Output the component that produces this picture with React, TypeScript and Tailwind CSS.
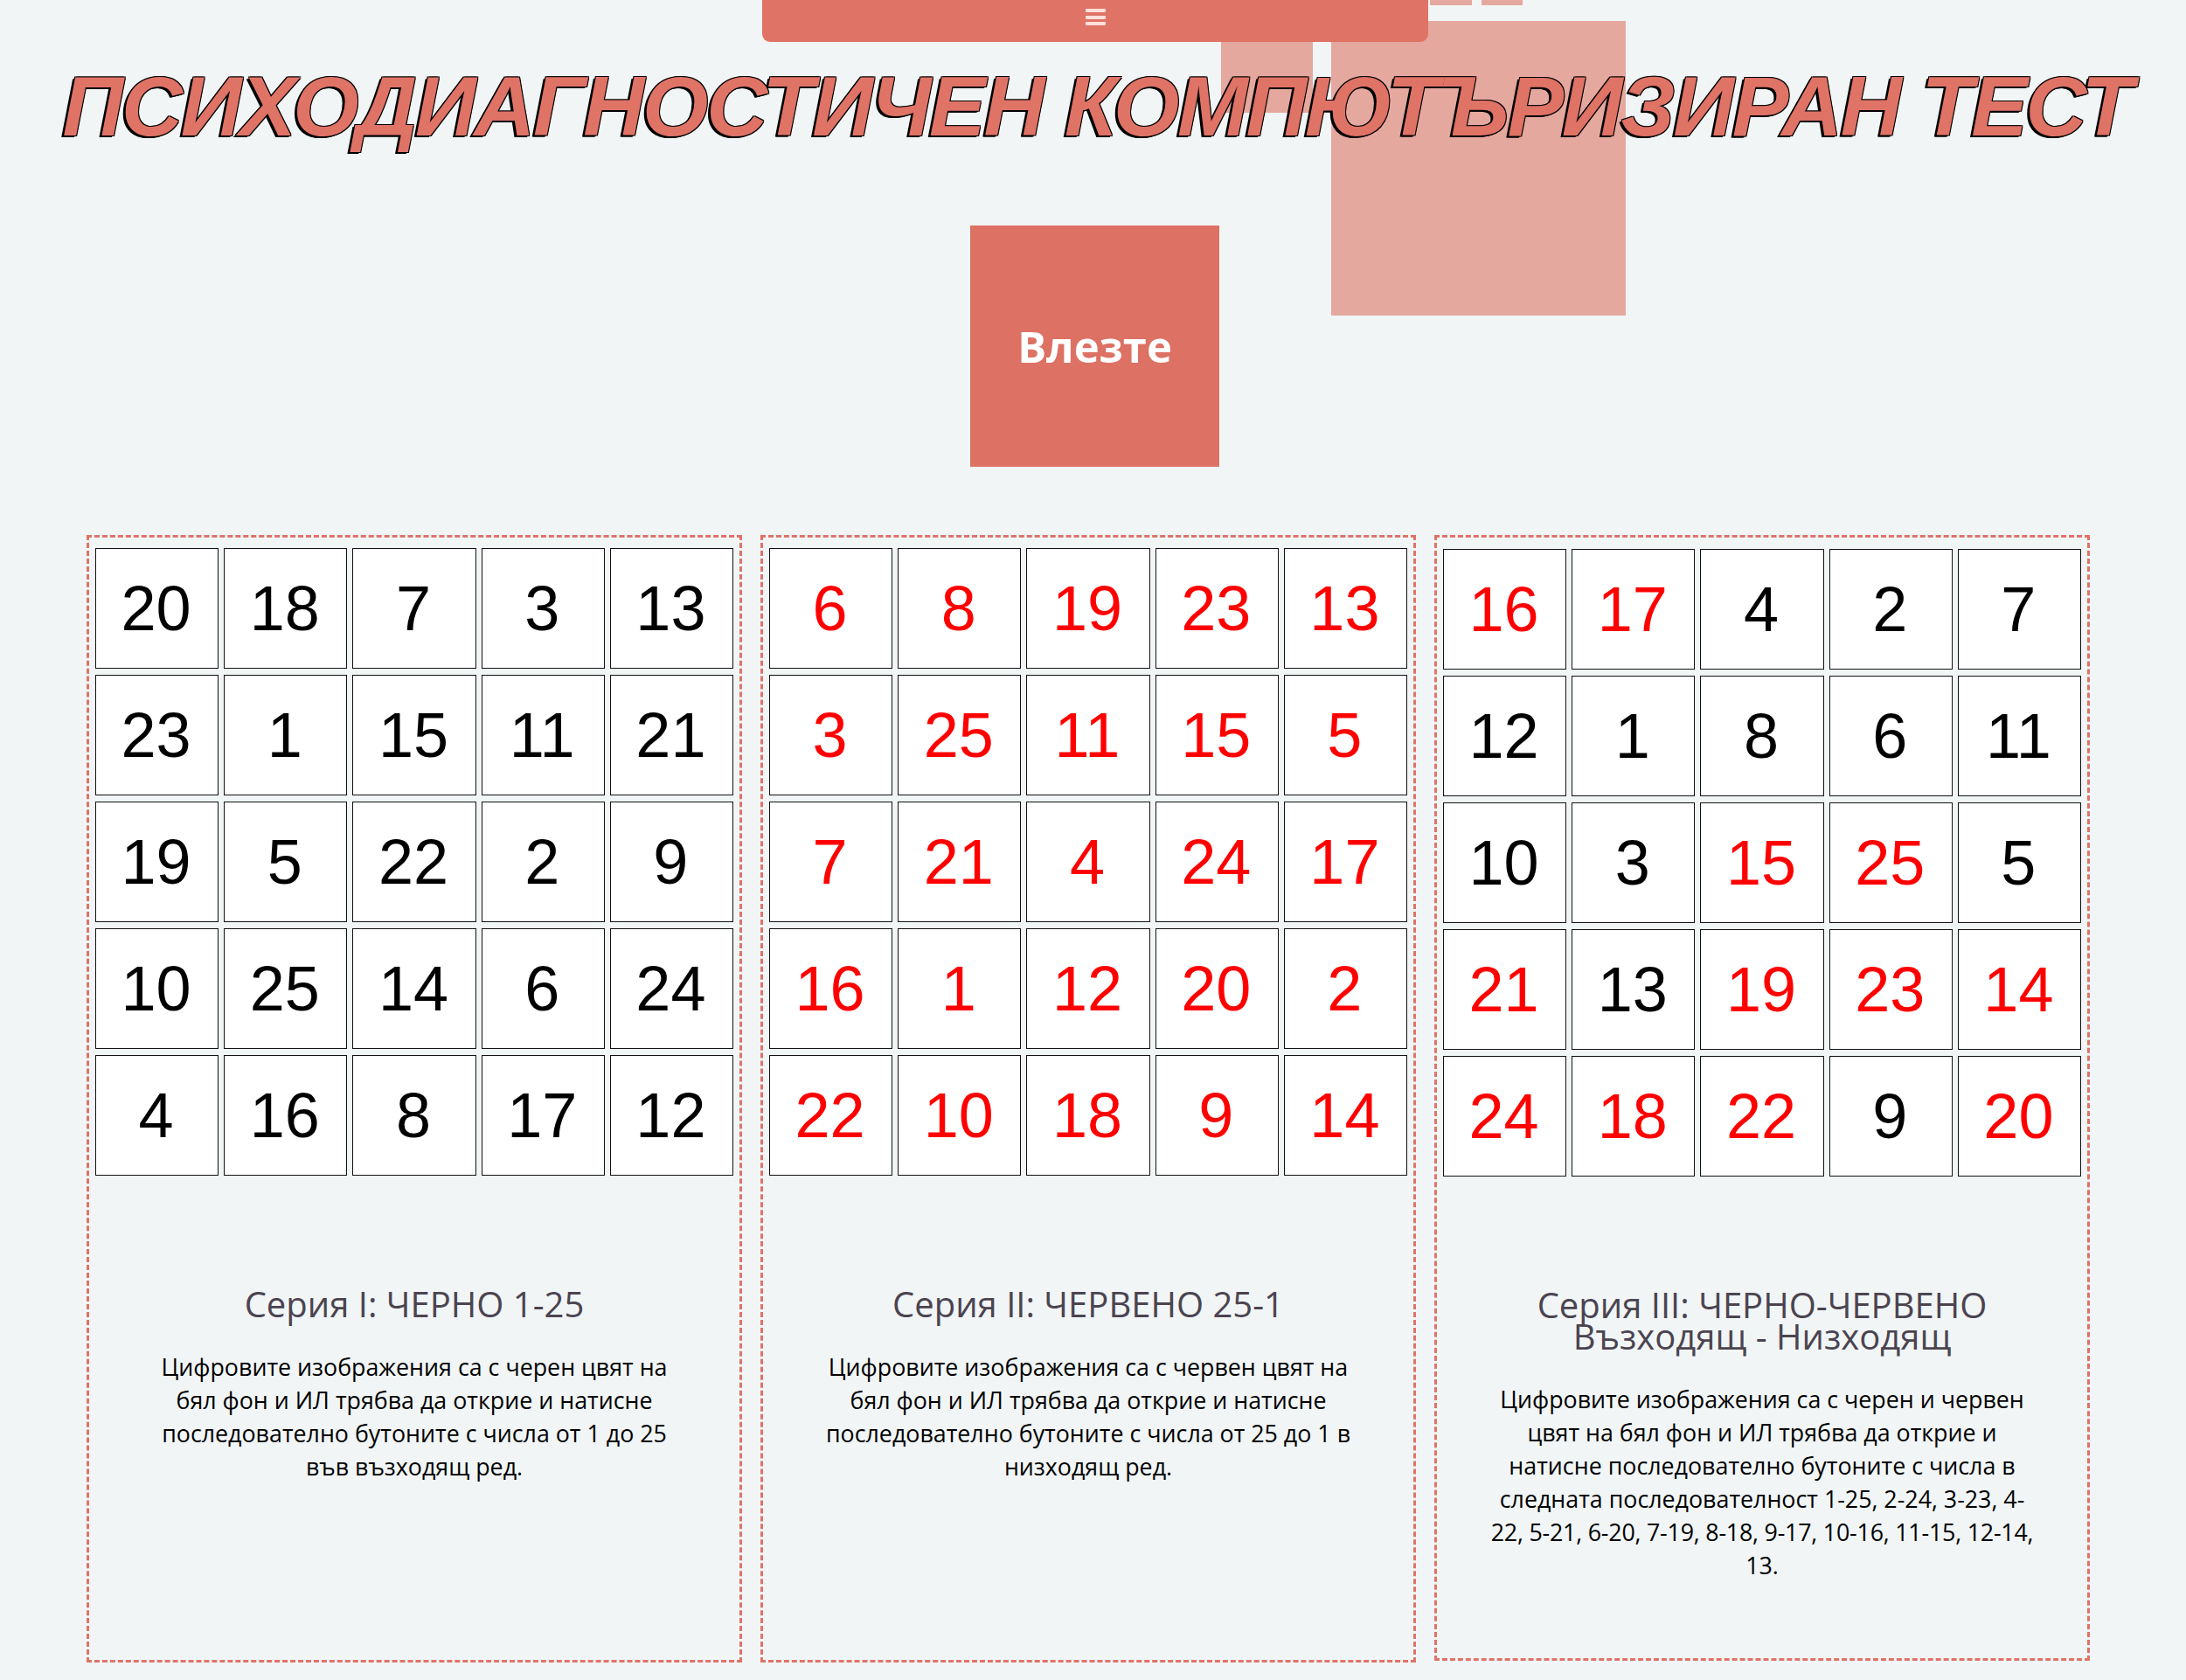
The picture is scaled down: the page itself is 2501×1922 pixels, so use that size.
import React from "react";

type Cell = { n: number; red: boolean };

const black = (nums: number[]): Cell[] => nums.map((n) => ({ n, red: false }));
const red = (nums: number[]): Cell[] => nums.map((n) => ({ n, red: true }));

const series = [
  {
    box: "h-[1290px] pt-[12px]",
    cells: black([20, 18, 7, 3, 13, 23, 1, 15, 11, 21, 19, 5, 22, 2, 9, 10, 25, 14, 6, 24, 4, 16, 8, 17, 12]),
    title: ["Серия I: ЧЕРНО 1-25"],
    text: [
      "Цифровите изображения са с черен цвят на",
      "бял фон и ИЛ трябва да открие и натисне",
      "последователно бутоните с числа от 1 до 25",
      "във възходящ ред.",
    ],
  },
  {
    box: "h-[1290px] pt-[12px]",
    cells: red([6, 8, 19, 23, 13, 3, 25, 11, 15, 5, 7, 21, 4, 24, 17, 16, 1, 12, 20, 2, 22, 10, 18, 9, 14]),
    title: ["Серия II: ЧЕРВЕНО 25-1"],
    text: [
      "Цифровите изображения са с червен цвят на",
      "бял фон и ИЛ трябва да открие и натисне",
      "последователно бутоните с числа от 25 до 1 в",
      "низходящ ред.",
    ],
  },
  {
    box: "h-[1288px] pt-[13px]",
    cells: [
      ...red([16, 17]), ...black([4, 2, 7, 12, 1, 8, 6, 11, 10, 3]), ...red([15, 25]), ...black([5]),
      ...red([21]), ...black([13]), ...red([19, 23, 14, 24, 18, 22]), ...black([9]), ...red([20]),
    ],
    title: ["Серия III: ЧЕРНО-ЧЕРВЕНО", "Възходящ - Низходящ"],
    text: [
      "Цифровите изображения са с черен и червен",
      "цвят на бял фон и ИЛ трябва да открие и",
      "натисне последователно бутоните с числа в",
      "следната последователност 1-25, 2-24, 3-23, 4-",
      "22, 5-21, 6-20, 7-19, 8-18, 9-17, 10-16, 11-15, 12-14,",
      "13.",
    ],
  },
];

const App = () => {
  return (
    <div className="relative w-[2501px] h-[1922px] overflow-hidden bg-[#f1f5f6] font-['Open_Sans',sans-serif]">
      {/* background squares */}
      <div className="absolute left-[1636px] top-0 w-[48px] h-[6px] bg-[#e5a89f]" />
      <div className="absolute left-[1695px] top-0 w-[47px] h-[6px] bg-[#e5a89f]" />
      <div className="absolute left-[1397px] top-[24px] w-[105px] h-[105px] bg-[#e5a89f]" />
      <div className="absolute left-[1523px] top-[24px] w-[337px] h-[337px] bg-[#e5a89f]" />

      {/* nav */}
      <div className="absolute left-[872px] top-0 w-[762px] h-[48px] rounded-b-[9px] bg-[#df7366] flex justify-center pt-[10px]">
        <div className="flex flex-col gap-[3.5px] w-[23px]">
          <span className="h-[4px] rounded-[1px] bg-[#ffe0da]" />
          <span className="h-[4px] rounded-[1px] bg-[#ffe0da]" />
          <span className="h-[4px] rounded-[1px] bg-[#ffe0da]" />
        </div>
      </div>

      <div className="relative">
        <h1 className="pt-[64px] pl-[9px] text-center whitespace-nowrap text-[97px] leading-[115px] tracking-[-2.3px] font-bold italic font-['Liberation_Sans',sans-serif] text-[#df7366] [text-shadow:-1px_-1px_0_#000,1px_-1px_0_#000,1px_1px_0_#000,-1px_1px_0_#000,-2px_2px_0_#000,-3px_2px_0_#000]">
          ПСИХОДИАГНОСТИЧЕН КОМПЮТЪРИЗИРАН ТЕСТ
        </h1>

        <div className="flex justify-center pl-[4px] mt-[79px]">
          <button className="w-[285px] h-[276px] pt-[2px] bg-[#dd7164] text-white text-[49px] font-bold">Влезте</button>
        </div>

        <div className="flex gap-[21px] pl-[99px] mt-[78px]">
          {series.map((s, i) => (
            <div key={i} className={`w-[750px] border-[3px] border-dashed border-[#df7366] pl-[7px] pr-[7px] ${s.box}`}>
              <div className="grid grid-cols-5 gap-x-[6px] gap-y-[7px]">
                {s.cells.map((c) => (
                  <div
                    key={c.n}
                    className={`h-[138px] flex items-center justify-center pr-[2px] border border-[#111] bg-white text-[72px] font-['Liberation_Sans',sans-serif] ${
                      c.red ? "text-[#ff0000]" : "text-black"
                    }`}
                  >
                    {c.n}
                  </div>
                ))}
              </div>
              <div className="mt-[129px] text-center text-[40px] leading-[36px] text-[#4b4450]">
                {s.title.map((t) => (
                  <div key={t}>{t}</div>
                ))}
              </div>
              <div className="mt-[35px] text-center text-[26.8px] leading-[38px] text-black">
                {s.text.map((t) => (
                  <div key={t} className={t.startsWith("22,") ? "tracking-[-0.2px]" : ""}>
                    {t}
                  </div>
                ))}
              </div>
            </div>
          ))}
        </div>
      </div>
    </div>
  );
};

export default App;
